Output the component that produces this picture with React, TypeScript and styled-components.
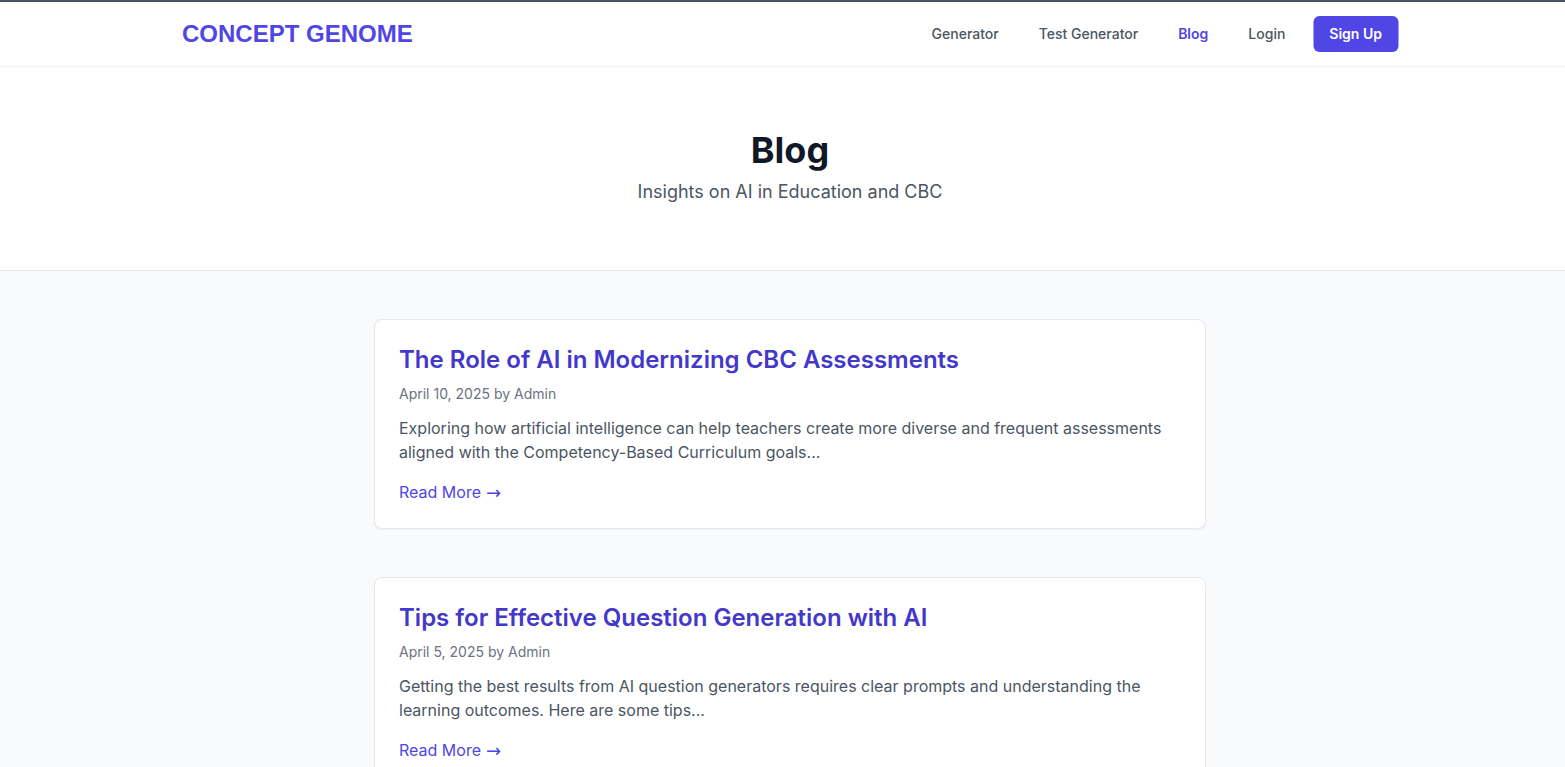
import React from "react";
import styled, { createGlobalStyle } from "styled-components";

const Global = createGlobalStyle`
  * { box-sizing: border-box; }
  html, body { margin: 0; padding: 0; }
  body {
    font-family: Inter, "Noto Sans", sans-serif;
    background: #f9fafb;
    color: #111827;
    -webkit-font-smoothing: antialiased;
  }
  a { text-decoration: none; }
`;

const Header = styled.header`
  background: #ffffff;
  border-top: 2px solid #4b5563;
  border-bottom: 1px solid #f0f1f3;
`;

const HeaderInner = styled.div`
  width: 1216px;
  margin: 0 auto;
  transform: translateX(7.5px);
  height: 64px;
  display: flex;
  align-items: center;
  justify-content: space-between;
`;

const Logo = styled.a`
  font-family: "Liberation Sans", Arial, sans-serif;
  font-weight: 700;
  font-size: 24px;
  color: #4f46e5;
`;

const Nav = styled.nav`
  display: flex;
  align-items: center;
`;

const NavLink = styled.a<{ $active?: boolean }>`
  font-size: 14px;
  line-height: 20px;
  font-weight: ${(p) => (p.$active ? 600 : 500)};
  color: ${(p) => (p.$active ? "#4f46e5" : "#4b5563")};
  & + & { margin-left: 40px; }
`;

const SignUp = styled.a`
  margin-left: 28px;
  background: #4f46e5;
  color: #ffffff;
  font-size: 14px;
  line-height: 20px;
  font-weight: 600;
  padding: 8px 16px;
  border-radius: 6px;
`;

const Hero = styled.section`
  background: #ffffff;
  border-bottom: 1px solid #e5e7eb;
  padding: 63px 0 64px 15px;
  text-align: center;
`;

const HeroTitle = styled.h1`
  margin: 0;
  font-size: 36px;
  line-height: 40px;
  font-weight: 700;
  color: #111827;
`;

const HeroSub = styled.p`
  margin: 8px 0 0;
  font-size: 18px;
  line-height: 28px;
  color: #4b5563;
`;

const Main = styled.main`
  padding: 48px 0 48px 15px;
`;

const List = styled.div`
  width: 832px;
  margin: 0 auto;
  display: flex;
  flex-direction: column;
  gap: 48px;
`;

const Card = styled.article`
  background: #ffffff;
  border: 1px solid #e5e7eb;
  border-radius: 8px;
  box-shadow: 0 1px 2px rgba(0, 0, 0, 0.05);
  padding: 24px;
`;

const CardTitle = styled.h2`
  margin: 0;
  font-size: 24px;
  line-height: 32px;
  font-weight: 600;
  color: #4338ca;
`;

const Meta = styled.p`
  margin: 8px 0 0;
  font-size: 14px;
  line-height: 20px;
  color: #6b7280;
`;

const Excerpt = styled.p`
  margin: 12px 0 0;
  font-size: 16px;
  line-height: 24px;
  color: #4b5563;
`;

const ReadMore = styled.a`
  display: inline-flex;
  align-items: center;
  gap: 5px;
  margin-top: 16px;
  font-size: 16px;
  line-height: 24px;
  height: 24px;
  font-weight: 400;
  color: #4f46e5;
`;

const Arrow = styled.span`
  font-family: "DejaVu Sans", sans-serif;
  font-size: 18px;
  line-height: 1;
  position: relative;
  top: 1px;
`;

const posts = [
  {
    title: "The Role of AI in Modernizing CBC Assessments",
    meta: "April 10, 2025 by Admin",
    excerpt:
      "Exploring how artificial intelligence can help teachers create more diverse and frequent assessments aligned with the Competency-Based Curriculum goals...",
  },
  {
    title: "Tips for Effective Question Generation with AI",
    meta: "April 5, 2025 by Admin",
    excerpt:
      "Getting the best results from AI question generators requires clear prompts and understanding the learning outcomes. Here are some tips...",
  },
];

export default function App() {
  return (
    <>
      <Global />
      <Header>
        <HeaderInner>
          <Logo href="#">CONCEPT GENOME</Logo>
          <Nav>
            <NavLink href="#">Generator</NavLink>
            <NavLink href="#">Test Generator</NavLink>
            <NavLink href="#" $active>
              Blog
            </NavLink>
            <NavLink href="#">Login</NavLink>
            <SignUp href="#">Sign Up</SignUp>
          </Nav>
        </HeaderInner>
      </Header>
      <Hero>
        <HeroTitle>Blog</HeroTitle>
        <HeroSub>Insights on AI in Education and CBC</HeroSub>
      </Hero>
      <Main>
        <List>
          {posts.map((p) => (
            <Card key={p.title}>
              <CardTitle>{p.title}</CardTitle>
              <Meta>{p.meta}</Meta>
              <Excerpt>{p.excerpt}</Excerpt>
              <ReadMore href="#">
                Read More<Arrow>→</Arrow>
              </ReadMore>
            </Card>
          ))}
        </List>
      </Main>
    </>
  );
}
